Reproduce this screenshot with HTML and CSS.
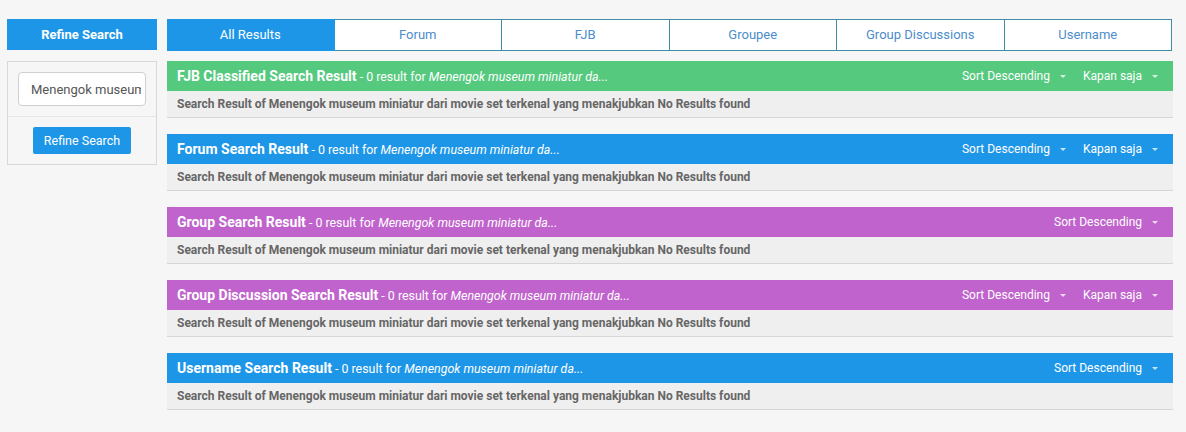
FILE: index.html
```html
<!DOCTYPE html>
<html>
<head>
<meta charset="utf-8">
<link rel="stylesheet" href="styles.css">
</head>
<body>
<div class="page">
  <aside class="sidebar">
    <div class="side-head">Refine Search</div>
    <div class="side-box">
      <div class="side-input-wrap">
        <input class="side-input" type="text" value="Menengok museum miniatur dari movie set terkenal yang menakjubkan">
      </div>
      <div class="side-btn-wrap">
        <button class="side-btn">Refine Search</button>
      </div>
    </div>
  </aside>
  <main class="main">
    <nav class="tabs">
      <div class="tab active">All Results</div>
      <div class="tab">Forum</div>
      <div class="tab">FJB</div>
      <div class="tab">Groupee</div>
      <div class="tab">Group Discussions</div>
      <div class="tab">Username</div>
    </nav>

    <section class="panel">
      <div class="panel-head green">
        <div class="ph-left"><b>FJB Classified Search Result</b> - 0 result for <i>Menengok museum miniatur da...</i></div>
        <div class="ph-right"><span class="dd">Sort Descending<span class="caret"></span></span><span class="dd">Kapan saja<span class="caret"></span></span></div>
      </div>
      <div class="panel-body">Search Result of Menengok museum miniatur dari movie set terkenal yang menakjubkan No Results found</div>
    </section>

    <section class="panel">
      <div class="panel-head blue">
        <div class="ph-left"><b>Forum Search Result</b> - 0 result for <i>Menengok museum miniatur da...</i></div>
        <div class="ph-right"><span class="dd">Sort Descending<span class="caret"></span></span><span class="dd">Kapan saja<span class="caret"></span></span></div>
      </div>
      <div class="panel-body">Search Result of Menengok museum miniatur dari movie set terkenal yang menakjubkan No Results found</div>
    </section>

    <section class="panel">
      <div class="panel-head purple">
        <div class="ph-left"><b>Group Search Result</b> - 0 result for <i>Menengok museum miniatur da...</i></div>
        <div class="ph-right"><span class="dd">Sort Descending<span class="caret"></span></span></div>
      </div>
      <div class="panel-body">Search Result of Menengok museum miniatur dari movie set terkenal yang menakjubkan No Results found</div>
    </section>

    <section class="panel">
      <div class="panel-head purple">
        <div class="ph-left"><b>Group Discussion Search Result</b> - 0 result for <i>Menengok museum miniatur da...</i></div>
        <div class="ph-right"><span class="dd">Sort Descending<span class="caret"></span></span><span class="dd">Kapan saja<span class="caret"></span></span></div>
      </div>
      <div class="panel-body">Search Result of Menengok museum miniatur dari movie set terkenal yang menakjubkan No Results found</div>
    </section>

    <section class="panel">
      <div class="panel-head blue">
        <div class="ph-left"><b>Username Search Result</b> - 0 result for <i>Menengok museum miniatur da...</i></div>
        <div class="ph-right"><span class="dd">Sort Descending<span class="caret"></span></span></div>
      </div>
      <div class="panel-body">Search Result of Menengok museum miniatur dari movie set terkenal yang menakjubkan No Results found</div>
    </section>
  </main>
</div>
</body>
</html>
```

FILE: styles.css
```css
* { box-sizing: border-box; }
html, body {
  margin: 0;
  background: #f6f6f6;
  font-family: Roboto, "Liberation Sans", sans-serif;
}
.page {
  display: flex;
  gap: 10px;
  padding: 19px 0 0 7px;
}
.sidebar {
  width: 150px;
  flex: none;
}
.side-head {
  height: 31px;
  background: #1e96e8;
  color: #fff;
  font-weight: 700;
  font-size: 13px;
  display: flex;
  align-items: center;
  justify-content: center;
}
.side-box {
  margin-top: 11px;
  border: 1px solid #d8d8d8;
}
.side-input-wrap {
  padding: 10px;
  border-bottom: 1px solid #e6e6e6;
}
.side-input {
  width: 128px;
  height: 34px;
  border: 1px solid #cfcfcf;
  border-radius: 4px;
  padding: 0 4px 0 12px;
  font-family: Roboto, "Liberation Sans", sans-serif;
  font-size: 13px;
  color: #555;
  background: #fff;
  display: block;
}
.side-btn-wrap {
  padding: 10px 0;
  display: flex;
  justify-content: center;
}
.side-btn {
  height: 27px;
  border: none;
  border-radius: 2px;
  background: #1e96e8;
  color: #fff;
  font-family: Roboto, "Liberation Sans", sans-serif;
  font-size: 12.5px;
  padding: 0 11px;
}
.main {
  width: 1006px;
  flex: none;
}
.tabs {
  display: flex;
  width: 1005px;
  height: 32px;
  margin-bottom: 10px;
}
.tab {
  flex: 1;
  border: 1px solid #3f8ca4;
  border-left: none;
  background: #fff;
  color: #4d8dcc;
  font-size: 13px;
  display: flex;
  align-items: center;
  justify-content: center;
  padding-bottom: 1px;
}
.tab.active {
  background: #1e96e8;
  border-color: #1e96e8;
  color: #fff;
}
.panel {
  margin-bottom: 16px;
}
.panel-head {
  height: 30px;
  display: flex;
  align-items: center;
  justify-content: space-between;
  padding: 0 15px 0 10px;
  color: #fff;
  font-size: 12.4px;
}
.panel-head b {
  font-size: 14px;
  font-weight: 700;
}
.panel-head i {
  font-style: italic;
}
.green { background: #55c97e; }
.blue { background: #1e96e8; }
.purple { background: #c063cd; }
.ph-right {
  display: flex;
  gap: 17px;
  font-size: 12px;
}
.dd {
  display: inline-flex;
  align-items: center;
}
.caret {
  width: 0;
  height: 0;
  border-left: 3px solid transparent;
  border-right: 3px solid transparent;
  border-top: 3px solid rgba(255,255,255,0.75);
  margin-left: 10px;
}
.panel-body {
  height: 27px;
  background: #efefef;
  border-bottom: 1px solid #d6d6d6;
  padding: 0 10px;
  display: flex;
  align-items: center;
  font-size: 12px;
  font-weight: 700;
  color: #666;
}
```
